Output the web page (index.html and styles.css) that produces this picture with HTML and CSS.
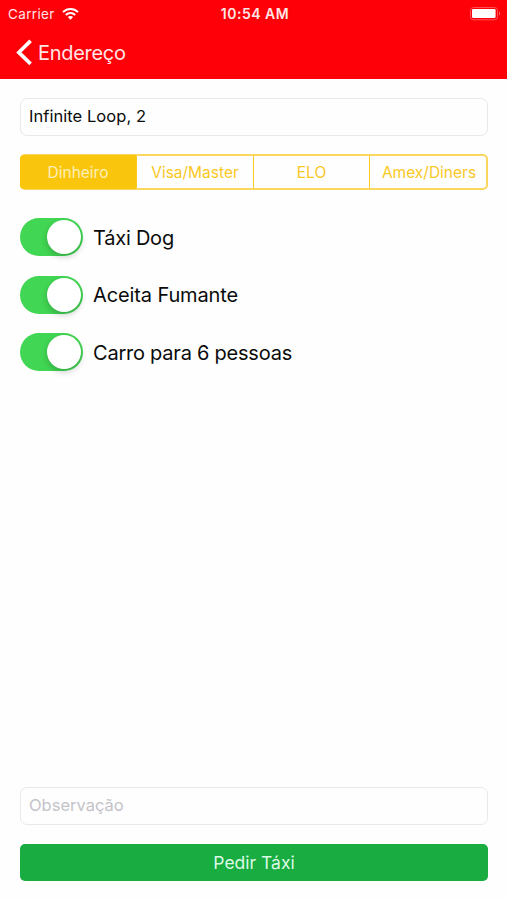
FILE: index.html
```html
<!DOCTYPE html>
<html lang="pt-BR">
<head>
<meta charset="utf-8">
<title>Endereço</title>
<link rel="stylesheet" href="styles.css">
</head>
<body>
<header class="header">
  <div class="status">
    <div class="status-left">
      <span class="carrier">Carrier</span>
      <svg class="wifi" width="17" height="12" viewBox="0 0 17 12" fill="none" stroke="#fff" stroke-width="2">
        <path d="M1 4.1C5.2 0 11.8 0 16 4.1"/>
        <path d="M3.8 7C6.5 4.4 10.5 4.4 13.2 7"/>
        <path d="M8.5 11.8L5.8 9.1C7.3 7.7 9.7 7.7 11.2 9.1Z" fill="#fff" stroke="none"/>
      </svg>
    </div>
    <span class="time">10:54 AM</span>
    <div class="status-right">
      <svg width="32" height="14" viewBox="0 0 32 14">
        <rect x="0.5" y="0.5" width="27" height="12.3" rx="3" fill="none" stroke="#ff5057" stroke-width="1"/>
        <rect x="2" y="2" width="23.6" height="9" rx="1.2" fill="#fff"/>
        <path d="M29 4.3C30.5 5 30.5 8 29 8.7Z" fill="#ff6066"/>
      </svg>
    </div>
  </div>
  <nav class="nav">
    <svg width="17" height="28" viewBox="0 0 17 28" fill="none" stroke="#fff" stroke-width="3.6"><path d="M15.6 1.9L3.8 13.4L15.6 24.9"/></svg>
    <span class="back">Endereço</span>
  </nav>
</header>
<main class="content">
  <div class="field"><span class="value">Infinite Loop, 2</span></div>
  <div class="segments">
    <div class="segment selected"><span>Dinheiro</span></div>
    <div class="segment"><span>Visa/Master</span></div>
    <div class="segment"><span>ELO</span></div>
    <div class="segment"><span>Amex/Diners</span></div>
  </div>
  <div class="options">
    <div class="option"><div class="switch"><div class="knob"></div></div><span>Táxi Dog</span></div>
    <div class="option"><div class="switch"><div class="knob"></div></div><span class="wide">Aceita Fumante</span></div>
    <div class="option"><div class="switch"><div class="knob"></div></div><span>Carro para 6 pessoas</span></div>
  </div>
  <div class="field note"><span class="placeholder">Observação</span></div>
  <div class="submit"><span>Pedir Táxi</span></div>
</main>
</body>
</html>
```

FILE: styles.css
```css
* { box-sizing: border-box; }
body {
  margin: 0;
  height: 900px;
  display: flex;
  flex-direction: column;
  background: #fefefe;
  color: #0b0b0b;
  font-family: Inter, "Liberation Sans", sans-serif;
  white-space: nowrap;
}
.header { height: 79px; background: #fe0008; color: #ffe6e6; }
.status {
  height: 27px;
  display: grid;
  grid-template-columns: 1fr auto 1fr;
  align-items: center;
  padding: 0 5px 0 8px;
  font-size: 13.5px;
}
.status-left { display: flex; align-items: center; gap: 7px; }
.carrier { letter-spacing: 0.35px; }
.time { font-weight: 600; font-size: 14px; letter-spacing: 0.5px; }
.status-right { display: flex; justify-content: flex-end; }
.nav { height: 52px; display: flex; align-items: center; gap: 6px; padding-left: 15px; font-size: 20px; }
.back { letter-spacing: -0.3px; }
.content { flex: 1; display: flex; flex-direction: column; padding: 19px 19px 19px 20px; }
.field {
  height: 38px;
  display: flex;
  align-items: center;
  padding: 0 8px 2px;
  border: 1px solid #e9e9e9;
  border-radius: 7px;
  font-size: 16.5px;
}
.value { letter-spacing: 0.05px; }
.segments {
  height: 36px;
  margin-top: 18px;
  display: grid;
  grid-template-columns: 114px 117px 116px 1fr;
  border: 2px solid #fad75c;
  border-radius: 5px;
  color: #f9c823;
  font-size: 15.5px;
}
.segment { display: flex; align-items: center; justify-content: center; border-left: 1px solid #f9c823; }
.segment:last-child { padding-left: 2px; }
.selected {
  background: #fac60d;
  color: #fff0b8;
  border-left: 0;
  border-radius: 3px 0 0 3px;
  box-shadow: -1px 0 0 1px #fac60d;
  padding-right: 2px;
}
.options { margin-top: 28px; display: flex; flex-direction: column; gap: 19.5px; font-size: 20px; letter-spacing: -0.23px; }
.option { height: 38px; display: flex; align-items: center; gap: 10px; }
.option span { padding-top: 1px; }
.wide { letter-spacing: -0.12px; }
.switch {
  width: 63px;
  height: 38px;
  display: flex;
  justify-content: flex-end;
  padding: 2px;
  border-radius: 19px;
  background: #41d653;
}
.knob { width: 34px; height: 34px; border-radius: 50%; background: #fff; box-shadow: 0 3px 6px rgba(0, 0, 0, 0.2); }
.note { margin-top: auto; }
.placeholder { color: #c3c3c8; }
.submit {
  height: 37px;
  margin-top: 19px;
  display: flex;
  align-items: center;
  justify-content: center;
  border-radius: 5px;
  background: #18ac41;
  color: #dcf9e4;
  font-size: 17.5px;
}
```
